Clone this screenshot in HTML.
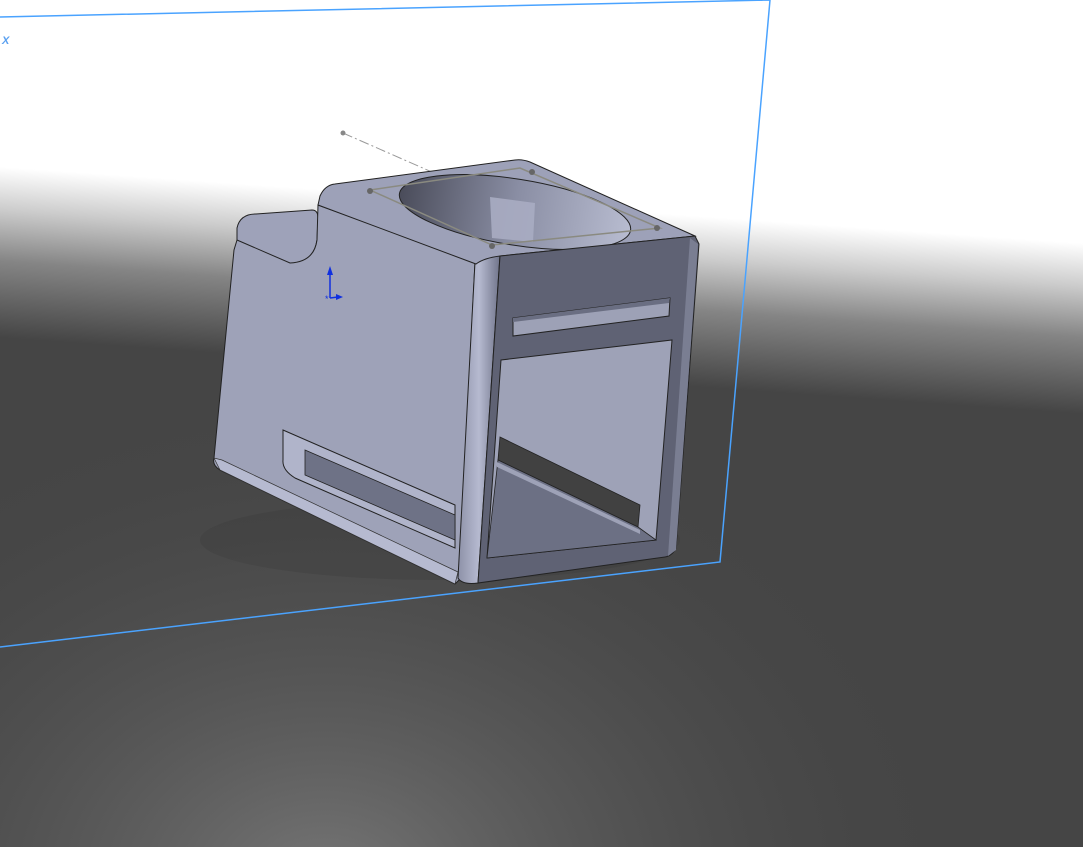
<!DOCTYPE html>
<html><head><meta charset="utf-8"><style>
html,body{margin:0;padding:0;width:1083px;height:847px;overflow:hidden;background:#fff}
svg{display:block}
</style></head><body>
<svg width="1083" height="847" viewBox="0 0 1083 847" xmlns="http://www.w3.org/2000/svg">
<defs>
<linearGradient id="bg" gradientUnits="userSpaceOnUse" x1="540" y1="205" x2="528" y2="375">
<stop offset="0" stop-color="#ffffff"/>
<stop offset="0.25" stop-color="#cccccc"/>
<stop offset="0.55" stop-color="#858585"/>
<stop offset="1" stop-color="#454545"/>
</linearGradient>
<radialGradient id="glow" cx="0.3" cy="1.05" r="0.6">
<stop offset="0" stop-color="#777" stop-opacity="1"/>
<stop offset="1" stop-color="#444" stop-opacity="0"/>
</radialGradient>
<linearGradient id="hole" x1="0" y1="0" x2="1" y2="0">
<stop offset="0" stop-color="#4a4c5a"/>
<stop offset="0.5" stop-color="#8a8ea4"/>
<stop offset="1" stop-color="#b8bcd0"/>
</linearGradient>
<linearGradient id="edge" x1="0" y1="0" x2="1" y2="0">
<stop offset="0" stop-color="#8d91a8"/>
<stop offset="0.5" stop-color="#b6bad0"/>
<stop offset="1" stop-color="#70748a"/>
</linearGradient>
</defs>
<rect width="1083" height="847" fill="url(#bg)"/>
<rect width="1083" height="847" fill="url(#glow)"/>
<polyline points="0,17 770,0 720,562 0,647" fill="none" stroke="#4aa3ff" stroke-width="1.5"/>
<text x="2" y="44" font-family="Liberation Sans,sans-serif" font-size="11" font-weight="bold" fill="#5aa0f0" font-style="italic">X</text>
<line x1="343" y1="133" x2="614" y2="252" stroke="#999" stroke-width="1" stroke-dasharray="10,3,2,3"/>
<circle cx="343" cy="133" r="2.5" fill="#888"/>
<ellipse cx="440" cy="540" rx="240" ry="40" fill="#333" opacity="0.2"/>
<path d="M237,228 Q240,214 256,214 L312,210 Q318,210 318,218 L317,240 Q314,262 292,264 Q286,262 276,258 L237,242 Z" fill="#9ea2b9" stroke="#222" stroke-width="1"/>
<path d="M237,240 L290,263 Q314,262 317,240 L318,205 L475,262 L459,580 L455,584 L220,470 Q212,465 214,458 L234,250 Z" fill="#9ea2b8" stroke="#222" stroke-width="1"/>
<path d="M214,458 L220,470 L455,584 L458,572 L222,460 Z" fill="#b6bad0" stroke="#333" stroke-width="0.7"/>
<path d="M283,430 L455,505 L455,548 L295,478 Q282,470 283,460 Z" fill="#b0b4ca" stroke="#222" stroke-width="1"/>
<path d="M305,450 L455,515 L455,540 L305,475 Z" fill="#6e7286" stroke="#222" stroke-width="0.8"/>
<path d="M475,262 Q490,252 500,255 L478,583 Q462,585 458,578 Z" fill="url(#edge)" stroke="#222" stroke-width="1"/>
<path d="M320,196 Q325,185 335,184 L515,160 Q522,159 530,162 L695,236 L500,256 Q484,258 476,264 L318,205 Z" fill="#9da1b8" stroke="#222" stroke-width="1"/>
<ellipse cx="515" cy="212" rx="117" ry="33" transform="rotate(9 515 212)" fill="url(#hole)" stroke="#222" stroke-width="1"/>
<path d="M490,197 L535,203 L533,242 L492,238 Z" fill="#a8acc2" opacity="0.9"/>
<polygon points="370,190 520,168 660,228 492,245" fill="none" stroke="#8a8a80" stroke-width="1.5"/>
<circle cx="370" cy="191" r="3" fill="#666"/><circle cx="532" cy="172" r="3" fill="#666"/>
<circle cx="657" cy="228" r="3" fill="#666"/><circle cx="492" cy="246" r="3" fill="#666"/>
<path d="M500,256 L695,236 L699,244 L676,548 Q672,556 665,557 L478,583 Z" fill="#5f6274" stroke="#222" stroke-width="1"/>
<path d="M690,238 L698,244 L676,550 L668,556 Z" fill="#7a7e92"/>
<path d="M513,318 L670,298 L669,316 L513,336 Z" fill="#9da1b6" stroke="#222" stroke-width="1"/>
<path d="M513,318 L670,298 L669,303 L513,322 Z" fill="#6a6e82"/>
<path d="M501,360 L672,340 L656,540 L487,558 Z" fill="#9ea2b7" stroke="#222" stroke-width="1"/>
<path d="M500,437 L640,505 L638,527 L498,460 Z" fill="#414141" stroke="#222" stroke-width="0.8"/>
<path d="M498,460 L638,527 L656,540 L487,558 Z" fill="#6c7084" stroke="#222" stroke-width="0.8"/>
<path d="M497,462 L640,530 L640,534 L497,467 Z" fill="#9ea2b7"/>
<line x1="330" y1="298" x2="330" y2="272" stroke="#1030e0" stroke-width="1.5"/>
<polygon points="330,266 327,275 333,275" fill="#1030e0"/>
<line x1="330" y1="298" x2="338" y2="297" stroke="#1030e0" stroke-width="1.5"/>
<polygon points="343,297 336,294 336,300" fill="#1030e0"/>
<text x="325" y="302" font-family="Liberation Sans,sans-serif" font-size="9" fill="#1030e0">*</text>
</svg>
</body></html>
